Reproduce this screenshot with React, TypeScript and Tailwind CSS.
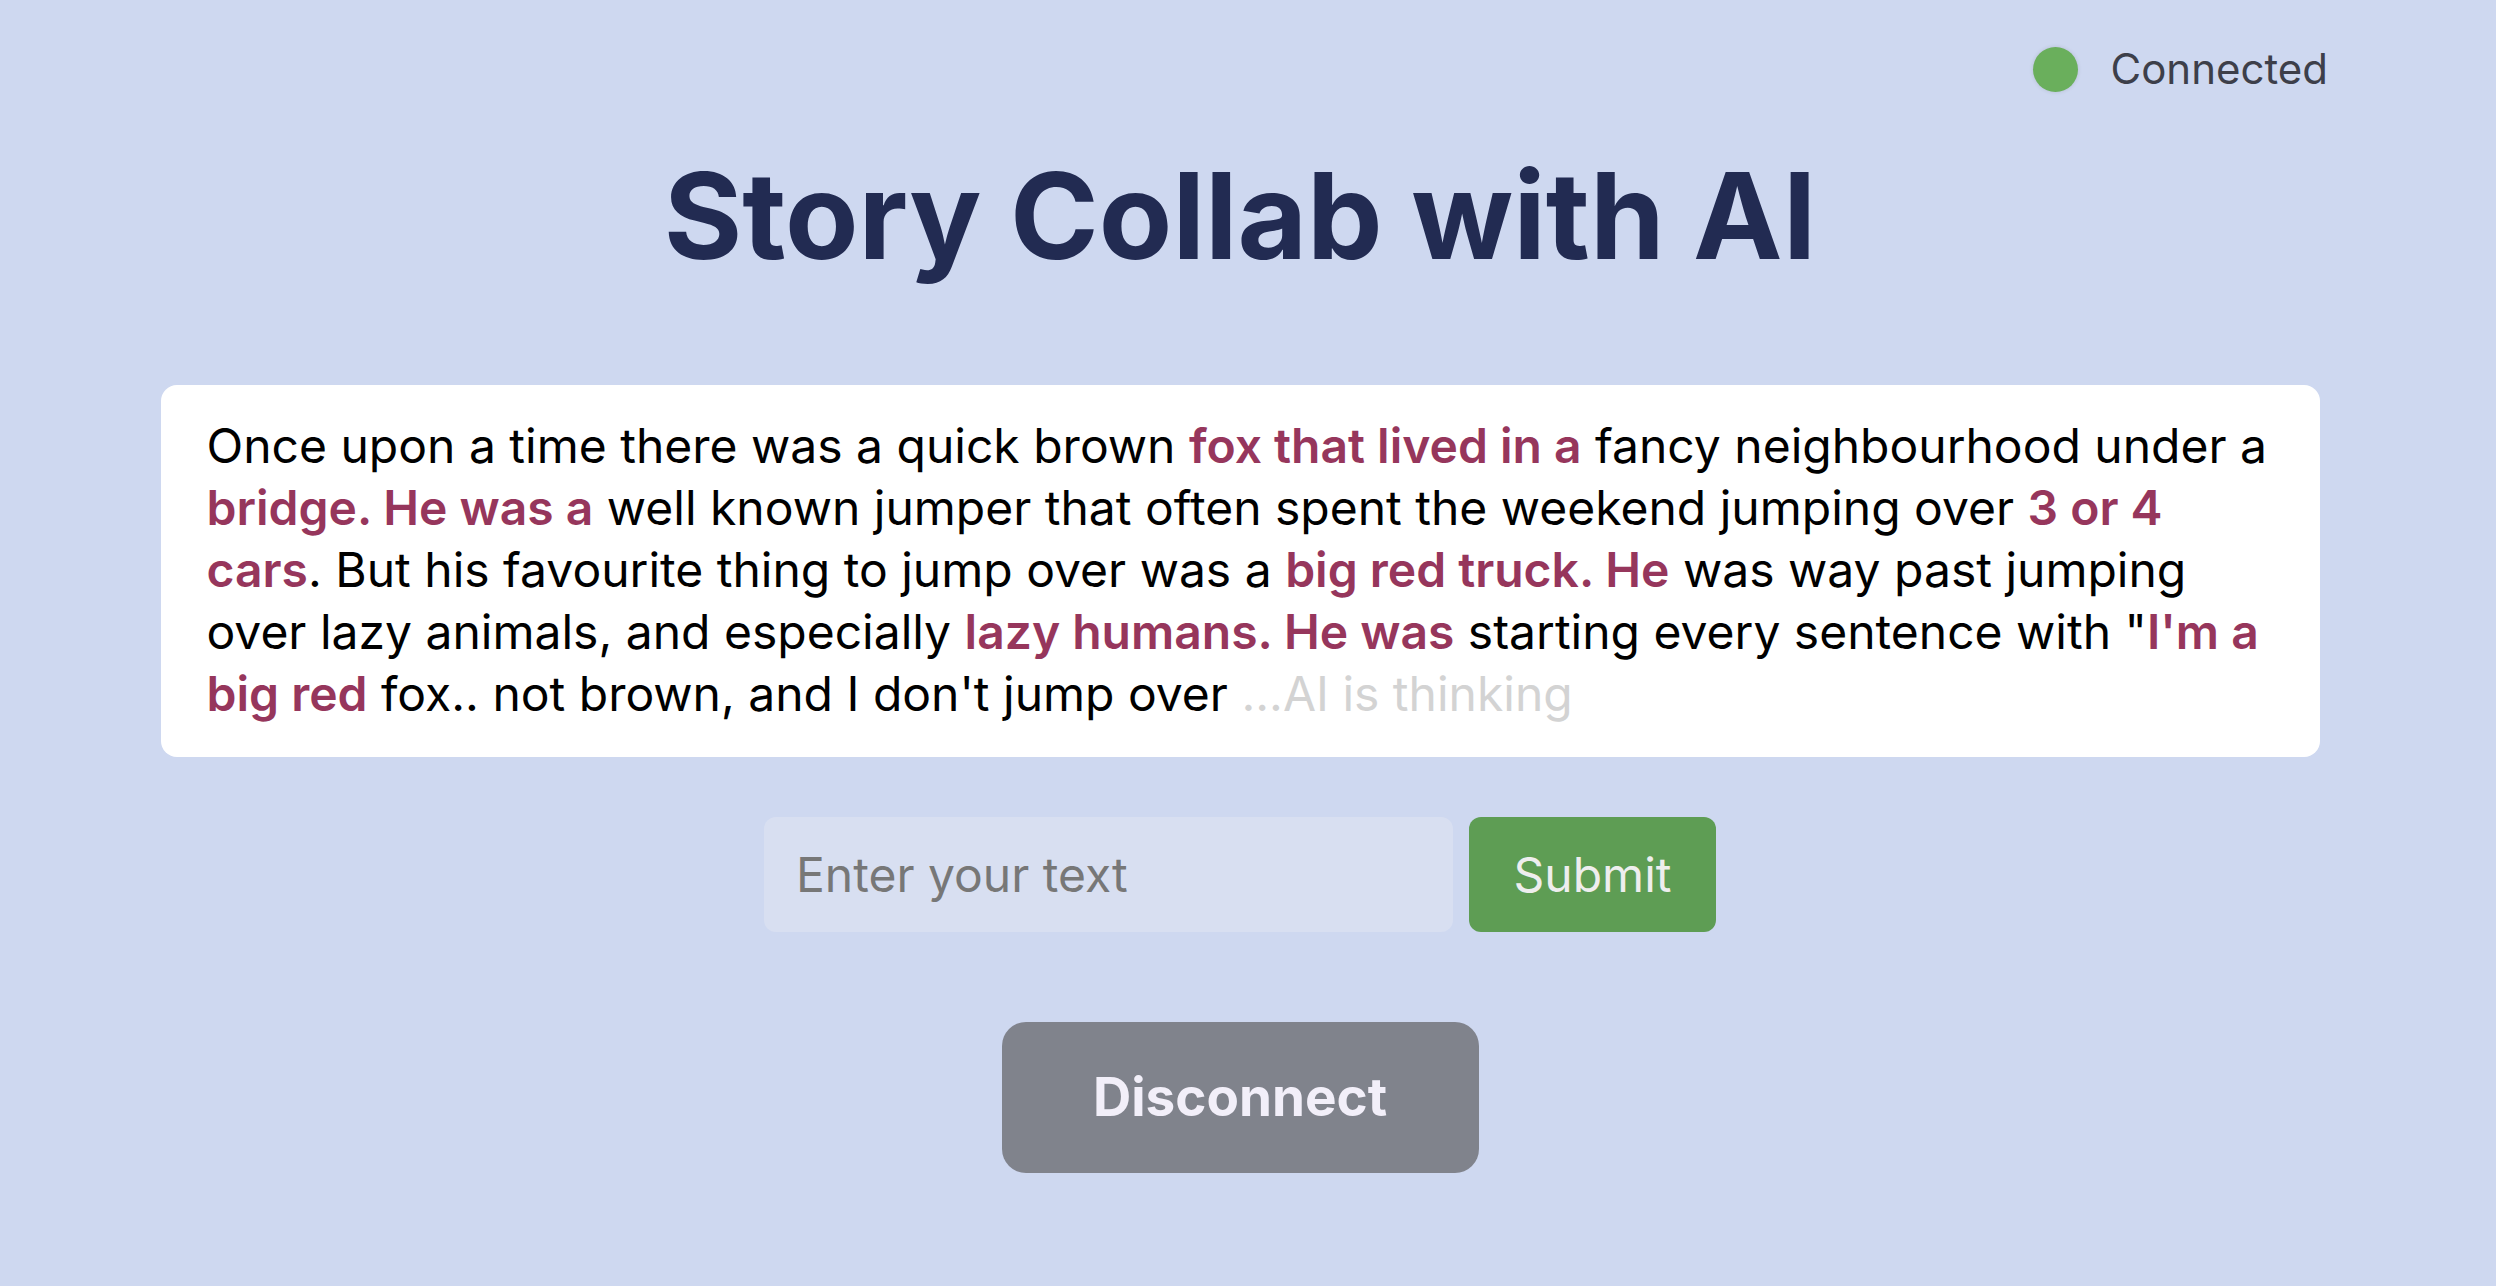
import React from "react";

const H = ({ children }: { children: React.ReactNode }) => (
  <span className="font-semibold text-[#96365c]">{children}</span>
);

export default function App() {
  return (
    <div
      className="min-h-[1286px] w-full bg-[#ced8f0] pr-[16px]"
      style={{ fontFamily: "Inter, 'Noto Sans', sans-serif" }}
    >
      <div className="flex justify-end pt-[43px] pr-[152px]">
        <div className="flex h-[52px] items-center gap-[32px]">
          <div className="h-[45px] w-[45px] rounded-full bg-[#6aaf5c] shadow-[0_0_4px_rgba(0,0,0,0.12)]" />
          <span className="text-[42px] leading-[52px] text-[#3d3f4a]">Connected</span>
        </div>
      </div>

      <h1 className="mt-[61px] text-center text-[120px] font-bold leading-[120px] text-[#222b52]">
        Story Collab with AI
      </h1>

      <div className="mx-auto mt-[109px] w-[2159px] rounded-[16px] bg-white pl-[46px] pr-[50px] pt-[30px] pb-[32px] text-[48px] leading-[62px] text-black">
        Once upon a time there was a quick brown <H>fox that lived in a</H> fancy neighbourhood under a{" "}
        <H>bridge. He was a</H> well known jumper that often spent the weekend jumping over <H>3 or 4 cars</H>. But
        his favourite thing to jump over was a <H>big red truck. He</H> was way past jumping over lazy animals, and
        especially <H>lazy humans. He was</H> starting every sentence with "<H>I'm a big red</H> fox.. not brown, and
        I don't jump over <span className="text-[#d3d3d3]">...AI is thinking</span>
      </div>

      <div className="mt-[60px] flex justify-center gap-[16px]">
        <input
          type="text"
          placeholder="Enter your text"
          className="h-[115px] w-[689px] rounded-[12px] bg-[#d8dff1] px-[32px] text-[48px] text-[#333] outline-none placeholder:text-[#777777]"
        />
        <button className="h-[115px] w-[247px] rounded-[12px] bg-[#5e9d54] text-[48px] text-[#eeeeee]">
          Submit
        </button>
      </div>

      <div className="mt-[90px] flex justify-center">
        <button className="h-[151px] w-[477px] rounded-[24px] bg-[#80838c] text-[53px] font-bold text-[#f2eff9]">
          Disconnect
        </button>
      </div>
    </div>
  );
}
